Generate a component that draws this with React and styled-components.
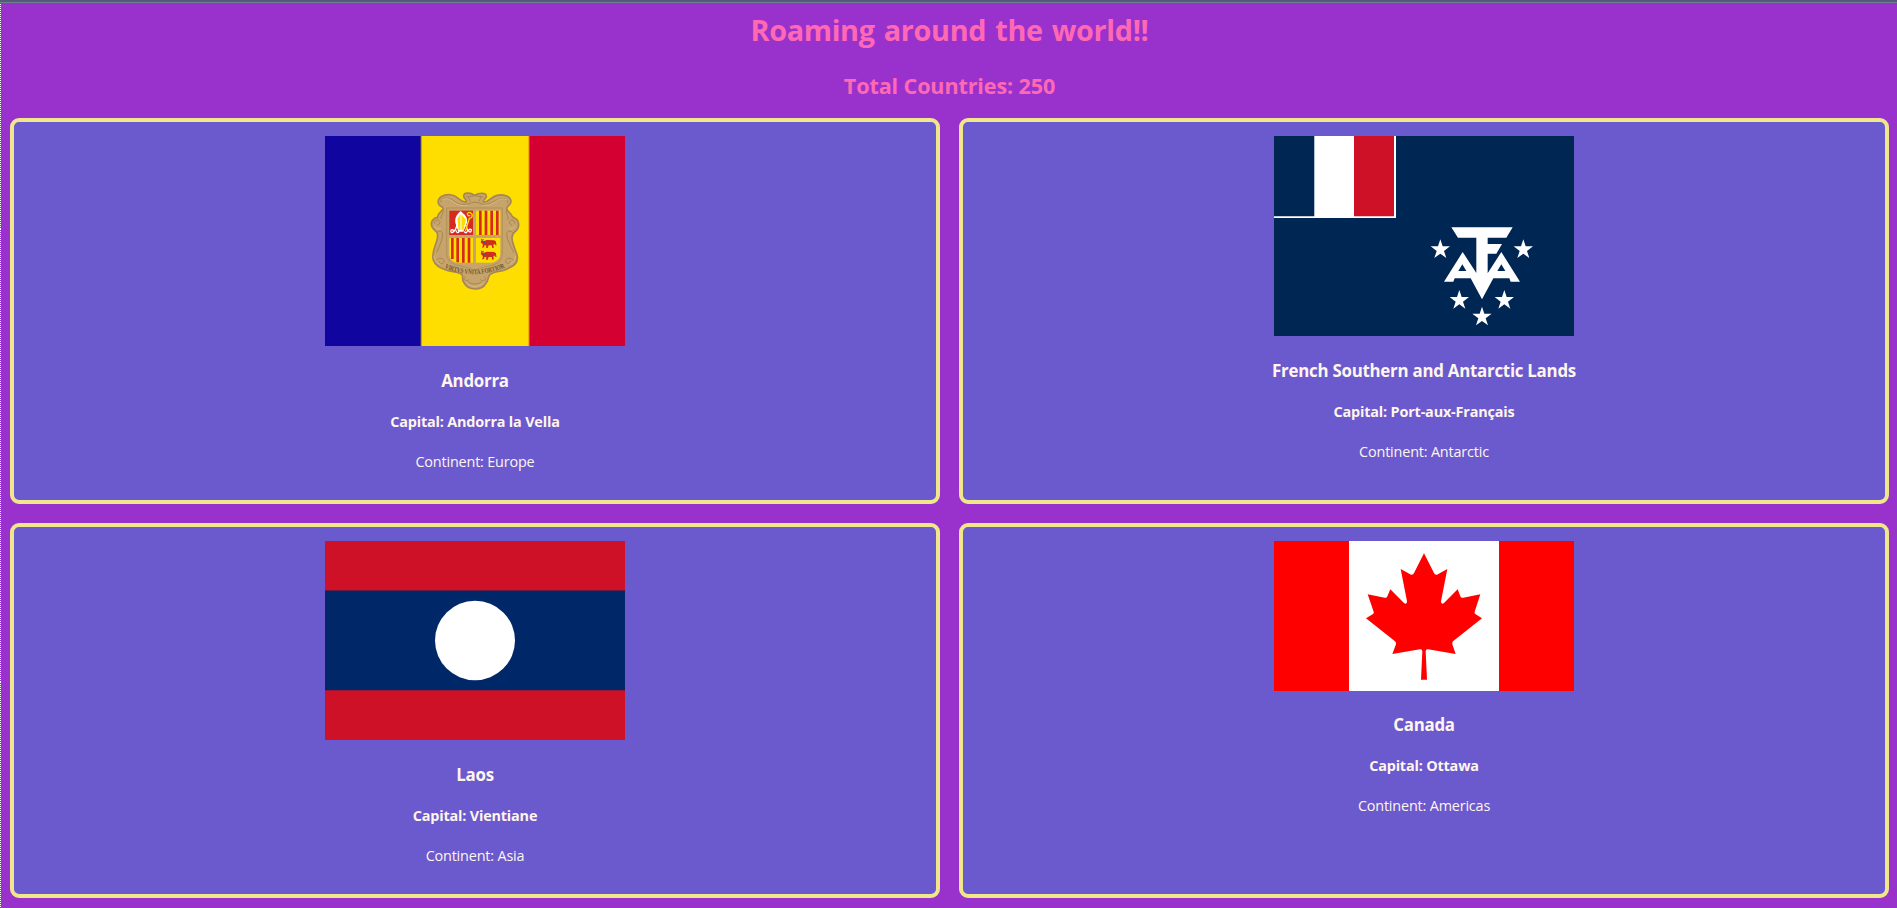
import React from "react";
import styled, { createGlobalStyle } from "styled-components";

const GlobalStyle = createGlobalStyle`
  * { box-sizing: border-box; }
  body {
    margin: 0;
    overflow: hidden;
    background: #9932cc;
    font-family: "Segoe UI", "Open Sans", "Noto Sans", sans-serif;
  }
  h1, h2, h3, h4, p { margin: 0; }
`;

const TopBar = styled.div`
  height: 3px;
  background: #535a7b;
  border-bottom: 1px solid #708090;
`;

const Page = styled.main`
  height: 905px;
  padding: 7px 8px 10px 9px;
  background: #9932cc;
  border-left: 1px dotted #fff;
  border-image: repeating-linear-gradient(#fff 0 1px, #9932cc 1px 2px) 1;
  border-image-width: 0 0 0 1px;
`;

const Header = styled.header`
  display: flex;
  flex-direction: column;
  gap: 21px;
  height: 108px;
  color: #ff69b4;
  text-align: center;
`;

const Title = styled.h1`
  font-size: 28.8px;
  line-height: 40px;
  letter-spacing: -0.34px;
  word-spacing: 2px;
`;

const Total = styled.h2`
  font-size: 21.6px;
  line-height: 30px;
  letter-spacing: -0.14px;
`;

const Countries = styled.section`
  display: grid;
  grid-template-columns: 1fr 1fr;
  grid-template-rows: 386px 375px;
  gap: 19px;
`;

const Card = styled.article`
  display: flex;
  flex-direction: column;
  align-items: center;
  gap: 20px;
  padding: 14px 14px 0;
  border: 4px solid #f0e68c;
  border-radius: 9px;
  background: #6a5acd;
  color: #fff5ee;
`;

const Flag = styled.svg`
  display: block;
  width: 300px;
  height: ${(p) => p.$height}px;
  margin-bottom: ${(p) => p.$space ?? 3}px;
`;

const Name = styled.h3`
  font-size: 16.85px;
  line-height: 22px;
  letter-spacing: -0.24px;
`;

const Capital = styled.h4`
  font-size: 14.4px;
  line-height: 20px;
  letter-spacing: -0.17px;
`;

const Continent = styled.p`
  font-size: 14.4px;
  line-height: 20px;
  letter-spacing: -0.17px;
`;

function Cow({ y }) {
  return (
    <g transform={`translate(182 ${y})`}>
      <path
        fill="#d52b1e"
        d="M2 5L11 7L18 4L41 5L46 11L44 20L41 15L38 20L40 27L35 28L33 20L24 20L21 28L16 28L17 21L12 19L10 26L4 27L7 20L4 14L0 12Z"
      />
      <path d="M1 2Q4 6 9 3M44 8L46 20M8 11L13 12" fill="none" stroke="#315c8d" strokeWidth="3" />
      <path d="M19 9L25 12L32 9M17 17L35 16" fill="none" stroke="#8e4a2b" strokeWidth="1.5" />
    </g>
  );
}

function Arms() {
  return (
    <g transform="translate(95 44) scale(.33333)">
      <path
        fill="#c7a46b"
        stroke="#a68753"
        strokeWidth="5"
        strokeLinejoin="round"
        d="M164 46C151 37 132 37 131 47C130 58 142 57 139 65C123 70 116 48 95 45C75 40 51 52 55 70C58 81 70 78 69 86C66 96 51 99 53 112C45 113 36 119 34 131C33 145 45 150 51 157C56 168 52 179 48 190C42 207 35 222 40 240C46 257 59 263 78 270C96 278 111 271 126 284C131 293 124 299 132 308C141 325 154 327 165 327C178 327 191 323 197 311C206 303 202 294 209 285C222 272 239 277 256 269C278 260 291 252 292 235C293 219 284 210 281 196C275 181 274 165 283 157C294 149 299 139 294 124C291 114 282 115 277 110C276 100 262 96 260 87C260 77 274 75 273 64C271 48 250 42 231 46C212 50 206 68 190 66C187 59 202 56 199 47C197 37 177 38 164 46Z"
      />
      <path
        fill="none"
        stroke="#a68753"
        strokeWidth="3"
        d="M62 66C65 48 87 54 98 60C116 75 128 74 145 72Q164 61 185 72C204 76 217 67 235 58C252 51 266 59 263 70M139 51Q164 43 190 51M145 51L151 64M183 51L177 64M68 87C74 101 60 105 64 117M261 87C254 101 267 106 264 119M43 131Q45 117 56 121Q66 128 52 136M285 131Q283 117 272 121Q262 128 276 136M49 158Q63 149 67 158C71 174 57 199 50 218M280 158Q265 149 261 158C257 174 273 199 281 218M48 242C59 228 76 237 72 247C65 255 55 249 59 243M282 242C270 228 252 237 258 247C265 255 274 249 270 243M137 291C123 296 140 306 148 299M192 291C205 296 189 306 181 299M143 306Q164 318 187 306"
      />
      <path
        fill="none"
        stroke="#e1c48b"
        strokeWidth="2"
        d="M66 60Q81 49 102 67Q118 80 143 76M260 60Q244 50 226 66Q209 79 187 76M42 138Q50 150 62 146M286 138Q279 150 267 146M42 227Q44 246 60 253M287 227Q285 246 268 253M138 307Q164 333 191 307"
      />
      <path fill="#c7a46b" stroke="#a68753" strokeWidth="2" d="M80 84H247V220Q247 248 219 255Q188 261 164 270Q140 261 109 255Q80 248 80 220Z" />
      <path fill="#d52b1e" d="M88 92H159V165H88Z" />
      <path fill="#fedd00" d="M168 92H241V165H168ZM88 174H159V248H112Q91 246 88 225ZM168 174H241V223Q240 242 217 248H168Z" />
      <path stroke="#d52b1e" strokeWidth="8" d="M181 92V165M198 92V165M215 92V165M232 92V165M97 174V237M113 174V247M130 174V248M147 174V248" />
      <path fill="#fff" d="M121 94C110 104 104 114 106 128L115 155H130L141 128C144 112 133 102 121 94Z" />
      <path fill="#fedd00" d="M122 101L112 116L116 150H130L138 119Z" />
      <path stroke="#fff" strokeWidth="3" d="M123 95V151" />
      <path fill="none" stroke="#fff" strokeWidth="4" d="M111 135C106 157 90 165 93 151Q99 145 101 155M138 135C142 157 155 162 154 149Q148 145 145 153M108 151Q111 163 118 154M132 154Q139 164 143 151" />
      <path fill="none" stroke="#fedd00" strokeWidth="4" d="M136 154L148 115Q159 114 156 102Q147 93 142 101Q143 110 151 106" />
      <Cow y={176} />
      <Cow y={211} />
      <path id="motto-line" fill="none" d="M74 263Q106 280 163 283Q222 279 257 261" />
      <text fill="#6f542a" fontFamily="Liberation Serif, serif" fontWeight="700" fontSize="21">
        <textPath href="#motto-line" textLength="186" lengthAdjust="spacingAndGlyphs">VIRTVS VNITA FORTIOR</textPath>
      </text>
    </g>
  );
}

function AndorraFlag() {
  return (
    <Flag viewBox="0 0 300 210" $height={210} $space={4}>
      <path fill="#10069f" d="M0 0H96V210H0Z" />
      <path fill="#fedd00" d="M96 0H204V210H96Z" />
      <path fill="#d50032" d="M204 0H300V210H204Z" />
      <path fill="#756747" d="M95.5 0H96.5V210H95.5Z" />
      <path fill="#e68218" d="M203.5 0H204.5V210H203.5Z" />
      <Arms />
    </Flag>
  );
}

const STARS = [
  [541, 389],
  [790, 389],
  [598, 541],
  [733, 541],
  [666, 591],
];

function AntarcticFlag() {
  return (
    <Flag viewBox="0 0 300 200" $height={200} $space={3.5}>
      <path fill="#002654" d="M0 0H300V200H0Z" />
      <path fill="#fff" d="M0 0H122V82H0Z" />
      <path fill="#002654" d="M0 0H40.3V80.3H0Z" />
      <path fill="#ce1126" d="M80 0H120V80.3H80Z" />
      <g transform="translate(-14 -16) scale(.33333)" fill="#fff">
        <path d="M574 322H758L739 353H683V372H726L709 401H683V460L724 396L780 485H752L748 475H700L666 538L632 475H584L580 485H552L608 396L649 459V353H594Z" />
        <path fill="#002654" d="M607 433L595 453H619ZM724 433L712 453H736Z" />
        {STARS.map(([x, y]) => (
          <path
            key={`${x}-${y}`}
            transform={`translate(${x} ${y})`}
            d="M0-31L7-10H29L11 4L18 25L0 12L-18 25L-11 4L-29-10H-7Z"
          />
        ))}
      </g>
    </Flag>
  );
}

function LaosFlag() {
  return (
    <Flag viewBox="0 0 300 199" $height={199} $space={4}>
      <path fill="#ce1126" d="M0 0H300V199H0Z" />
      <path fill="#002868" d="M0 49.5H300V149.3H0Z" />
      <ellipse cx="150" cy="99.5" rx="40" ry="39.7" fill="#fff" />
    </Flag>
  );
}

function CanadaFlag() {
  return (
    <Flag viewBox="0 0 300 150" $height={150}>
      <path fill="#f00" d="M0 0H300V150H0Z" />
      <path fill="#fff" d="M75 0H225V150H75Z" />
      <path
        transform="translate(56 -1) scale(.33333)"
        fill="#f00"
        d="M282 40L312 99Q315 106 321 104L352 87L333 184Q333 195 342 189L383 148L391 169Q393 175 400 173L451 163L434 215Q432 220 437 223L456 235L369 304Q366 307 367 313L377 342L294 328Q287 327 287 334L291 419H273L277 334Q277 327 270 328L187 342L198 313Q199 307 195 304L108 235L128 223Q133 220 131 215L113 163L164 173Q170 175 172 169L181 148L222 189Q231 195 231 184L212 87L243 104Q249 106 252 99Z"
      />
    </Flag>
  );
}

const COUNTRIES = [
  { name: "Andorra", capital: "Andorra la Vella", continent: "Europe", FlagImage: AndorraFlag },
  { name: "French Southern and Antarctic Lands", capital: "Port-aux-Français", continent: "Antarctic", FlagImage: AntarcticFlag },
  { name: "Laos", capital: "Vientiane", continent: "Asia", FlagImage: LaosFlag },
  { name: "Canada", capital: "Ottawa", continent: "Americas", FlagImage: CanadaFlag },
];

export default function App() {
  return (
    <>
      <GlobalStyle />
      <TopBar />
      <Page>
        <Header>
          <Title>Roaming around the world!!</Title>
          <Total>Total Countries: 250</Total>
        </Header>
        <Countries>
          {COUNTRIES.map(({ name, capital, continent, FlagImage }) => (
            <Card key={name}>
              <FlagImage />
              <Name>{name}</Name>
              <Capital>Capital: {capital}</Capital>
              <Continent>Continent: {continent}</Continent>
            </Card>
          ))}
        </Countries>
      </Page>
    </>
  );
}
